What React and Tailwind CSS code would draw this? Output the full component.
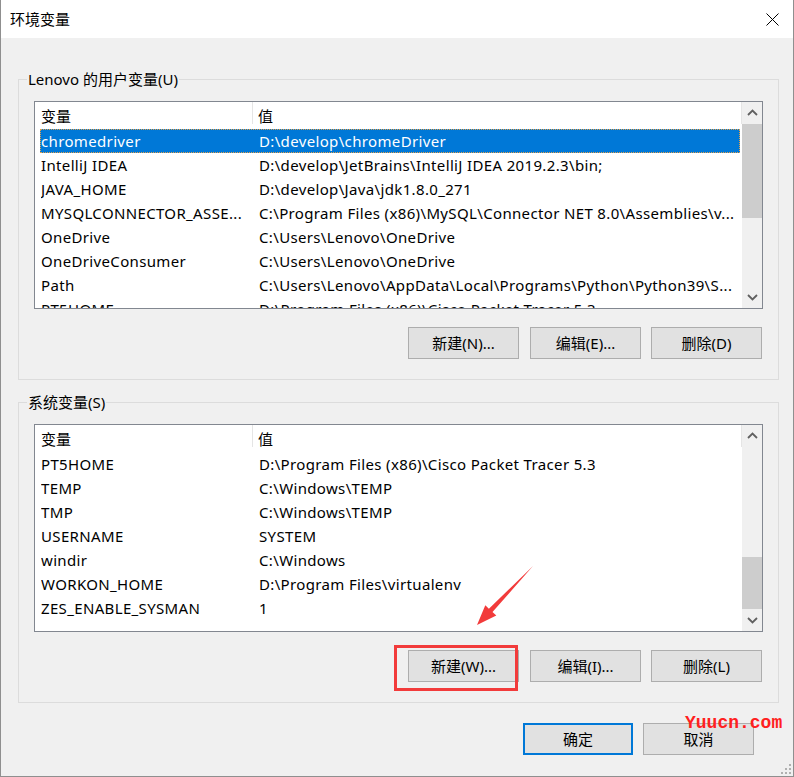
import React from "react";

const FONT = "font-['Noto_Sans','Noto_Sans_CJK_SC',sans-serif]";

const userVars = [
  ["chromedriver", "D:\\develop\\chromeDriver", true],
  ["IntelliJ IDEA", "D:\\develop\\JetBrains\\IntelliJ IDEA 2019.2.3\\bin;"],
  ["JAVA_HOME", "D:\\develop\\Java\\jdk1.8.0_271"],
  ["MYSQLCONNECTOR_ASSE...", "C:\\Program Files (x86)\\MySQL\\Connector NET 8.0\\Assemblies\\v..."],
  ["OneDrive", "C:\\Users\\Lenovo\\OneDrive"],
  ["OneDriveConsumer", "C:\\Users\\Lenovo\\OneDrive"],
  ["Path", "C:\\Users\\Lenovo\\AppData\\Local\\Programs\\Python\\Python39\\S..."],
  ["PT5HOME", "D:\\Program Files (x86)\\Cisco Packet Tracer 5.3"],
];

const sysVars = [
  ["PT5HOME", "D:\\Program Files (x86)\\Cisco Packet Tracer 5.3"],
  ["TEMP", "C:\\Windows\\TEMP"],
  ["TMP", "C:\\Windows\\TEMP"],
  ["USERNAME", "SYSTEM"],
  ["windir", "C:\\Windows"],
  ["WORKON_HOME", "D:\\Program Files\\virtualenv"],
  ["ZES_ENABLE_SYSMAN", "1"],
];

function Chevron({ up }) {
  return (
    <svg width="11" height="7" viewBox="0 0 11 7">
      <polyline
        points={up ? "1,6 5.5,1.5 10,6" : "1,1 5.5,5.5 10,1"}
        fill="none"
        stroke="#606060"
        strokeWidth="1.8"
      />
    </svg>
  );
}

function ScrollBar({ thumbTop, thumbHeight }) {
  return (
    <div className="w-[20px] h-full bg-[#f0f0f0] flex flex-col shrink-0">
      <div className="h-[21px] flex items-center justify-center shrink-0">
        <Chevron up />
      </div>
      <div className="flex-1 flex flex-col">
        <div style={{ height: thumbTop }} />
        <div className="bg-[#cdcdcd]" style={{ height: thumbHeight }} />
      </div>
      <div className="h-[21px] flex items-center justify-center shrink-0">
        <Chevron />
      </div>
    </div>
  );
}

function VarList({ rows, thumbTop, thumbHeight }) {
  return (
    <div className="ml-[15px] mr-[15px] h-[208px] border border-[#828790] bg-white flex overflow-hidden">
      <div className="flex-1 flex flex-col overflow-hidden">
        <div className="h-[27px] flex items-center shrink-0 text-black">
          <div className="w-[217px] pl-[6px] leading-[20px]">变量</div>
          <div className="w-px h-[22px] bg-[#e5e5e5] self-start" />
          <div className="flex-1 pl-[5px] leading-[20px]">值</div>
          <div className="w-px h-[22px] bg-[#e5e5e5] self-start" />
        </div>
        {rows.map(([name, val, sel]) => (
          <div
            key={name}
            className={
              "ml-[5px] mr-[2px] h-[24px] shrink-0 flex items-center whitespace-nowrap tracking-[0.35px] " +
              (sel
                ? "bg-[#0078d7] text-white border border-dotted border-[#e3a04a]"
                : "text-black border border-transparent")
            }
          >
            <div className="w-[218px] overflow-hidden leading-[22px]">{name}</div>
            <div className="flex-1 overflow-hidden leading-[22px]">{val}</div>
          </div>
        ))}
      </div>
      <ScrollBar thumbTop={thumbTop} thumbHeight={thumbHeight} />
    </div>
  );
}

function Btn({ children, primary, w = "w-[111px]", extra = "" }) {
  return (
    <div
      className={
        w +
        " h-[32px] flex items-center justify-center bg-[#e1e1e1] text-black " +
        (primary ? "border-2 border-[#0078d7] " : "border border-[#adadad] ") +
        extra
      }
    >
      {children}
    </div>
  );
}

function Group({ title, rows, thumbTop, thumbHeight, buttons }) {
  return (
    <div className="ml-[17px] w-[761px] border border-[#dcdcdc] flex flex-col pb-[20px]">
      <span className="-mt-[11px] ml-[8px] w-fit px-[1px] h-[20px] leading-[20px] bg-[#f0f0f0] text-black">
        {title}
      </span>
      <div className="mt-[12px]">
        <VarList rows={rows} thumbTop={thumbTop} thumbHeight={thumbHeight} />
      </div>
      <div className="mt-[18px] flex justify-end gap-[10px] mr-[16px]">{buttons}</div>
    </div>
  );
}

export default function App() {
  return (
    <div
      className={
        FONT +
        " relative w-[794px] h-[777px] bg-[#f0f0f0] text-[15px] border-l border-r border-b border-[#8f8f8f] overflow-hidden flex flex-col"
      }
    >
      <div className="h-[38px] bg-white flex items-center justify-between shrink-0">
        <span className="ml-[9px] text-black leading-[20px]">环境变量</span>
        <svg width="13" height="13" viewBox="0 0 13 13" className="mr-[14px]">
          <path d="M0.5 0.5 L12.5 12.5 M12.5 0.5 L0.5 12.5" stroke="#000" strokeWidth="1" />
        </svg>
      </div>

      <div className="mt-[41px]">
        <Group
          title="Lenovo 的用户变量(U)"
          rows={userVars}
          thumbTop={1}
          thumbHeight={94}
          buttons={[
            <Btn key="n" extra="mr-[1px]">新建(N)...</Btn>,
            <Btn key="e">编辑(E)...</Btn>,
            <Btn key="d">删除(D)</Btn>,
          ]}
        />
      </div>

      <div className="mt-[22px]">
        <Group
          title="系统变量(S)"
          rows={sysVars}
          thumbTop={111}
          thumbHeight={52}
          buttons={[
            <Btn key="w" extra="mr-[1px]">新建(W)...</Btn>,
            <Btn key="i">编辑(I)...</Btn>,
            <Btn key="l">删除(L)</Btn>,
          ]}
        />
      </div>

      <div className="mt-[20px] flex justify-end gap-[10px] pr-[39px]">
        <Btn primary w="w-[110px]">确定</Btn>
        <Btn w="w-[111px]">取消</Btn>
      </div>

      {/* red annotation box */}
      <div className="absolute left-[393px] top-[645px] w-[124px] h-[46px] border-[3px] border-[#f23b3b]" />

      {/* red arrow */}
      <svg className="absolute left-0 top-0 pointer-events-none" width="794" height="777">
        <polygon
          points="532,566 491.5,612.1 495.3,615.6 476,625 484.3,605.2 487.9,608.7"
          fill="#f23b3b"
        />
      </svg>

      {/* watermark */}
      <div className="absolute left-[684px] top-[712px] font-['Liberation_Mono',monospace] text-[18px] leading-[22px] text-[#ff2020] font-bold">
        Yuucn.com
      </div>

      {/* resize grip */}
      <svg className="absolute right-[2px] bottom-[2px]" width="10" height="10" viewBox="0 0 10 10">
        <rect x="8" y="0" width="2" height="2" fill="#b0b0b0" />
        <rect x="4" y="4" width="2" height="2" fill="#b0b0b0" />
        <rect x="8" y="4" width="2" height="2" fill="#b0b0b0" />
        <rect x="0" y="8" width="2" height="2" fill="#b0b0b0" />
        <rect x="4" y="8" width="2" height="2" fill="#b0b0b0" />
        <rect x="8" y="8" width="2" height="2" fill="#b0b0b0" />
      </svg>
    </div>
  );
}
